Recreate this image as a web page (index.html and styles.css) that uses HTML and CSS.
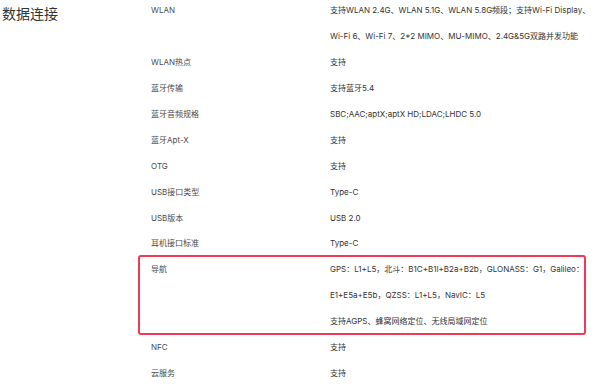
FILE: index.html
```html
<!DOCTYPE html>
<html lang="zh-CN">
<head>
<meta charset="utf-8">
<link rel="stylesheet" href="styles.css">
</head>
<body>
<div class="section">
  <h2 class="title">数据连接</h2>
  <div class="table">
    <div class="row"><div class="label">WLAN</div><div class="value"><span class="line">支持WLAN 2.4G、WLAN 5.1G、WLAN 5.8G频段；支持Wi-Fi Display、</span><span class="line">Wi-Fi 6、Wi-Fi 7、2*2 MIMO、MU-MIMO、2.4G&amp;5G双路并发功能</span></div></div>
    <div class="row"><div class="label">WLAN热点</div><div class="value">支持</div></div>
    <div class="row"><div class="label">蓝牙传输</div><div class="value">支持蓝牙5.4</div></div>
    <div class="row"><div class="label">蓝牙音频规格</div><div class="value">SBC;AAC;aptX;aptX HD;LDAC;LHDC 5.0</div></div>
    <div class="row"><div class="label">蓝牙Apt-X</div><div class="value">支持</div></div>
    <div class="row"><div class="label">OTG</div><div class="value">支持</div></div>
    <div class="row"><div class="label">USB接口类型</div><div class="value">Type-C</div></div>
    <div class="row"><div class="label">USB版本</div><div class="value">USB 2.0</div></div>
    <div class="row"><div class="label">耳机接口标准</div><div class="value">Type-C</div></div>
    <div class="row highlight"><div class="label">导航</div><div class="value"><span class="line">GPS：L1+L5，北斗：B1C+B1I+B2a+B2b，GLONASS：G1，Galileo：</span><span class="line">E1+E5a+E5b，QZSS：L1+L5，NavIC：L5</span><span class="line">支持AGPS、蜂窝网络定位、无线局域网定位</span></div></div>
    <div class="row"><div class="label">NFC</div><div class="value">支持</div></div>
    <div class="row"><div class="label">云服务</div><div class="value">支持</div></div>
  </div>
</div>
</body>
</html>
```
FILE: styles.css
```css
html, body {
  margin: 0;
  padding: 0;
  background: #ffffff;
}
body {
  font-family: "Inter", "Noto Sans CJK SC", sans-serif;
  color: #333333;
}
.section {
  display: flex;
  align-items: flex-start;
}
.title {
  flex: none;
  width: 138px;
  margin: 0;
  padding-left: 2px;
  font-family: "Noto Sans CJK SC", sans-serif;
  font-size: 14px;
  font-weight: normal;
  line-height: 26px;
  color: #333333;
}
.table {
  width: 444px;
  margin-top: -2px;
}
.row {
  display: grid;
  grid-template-columns: 190px 1fr;
  font-size: 8px;
  line-height: 25.93px;
}
.label {
  padding-left: 11px;
  color: #4a4a4a;
}
.value {
  color: #333333;
  white-space: nowrap;
}
.line {
  display: block;
}
.highlight {
  position: relative;
}
.highlight::after {
  content: "";
  position: absolute;
  top: -2px;
  bottom: 0;
  left: -2px;
  right: -2px;
  border: 2px solid #ef3a55;
  border-radius: 3px;
  pointer-events: none;
}
```
